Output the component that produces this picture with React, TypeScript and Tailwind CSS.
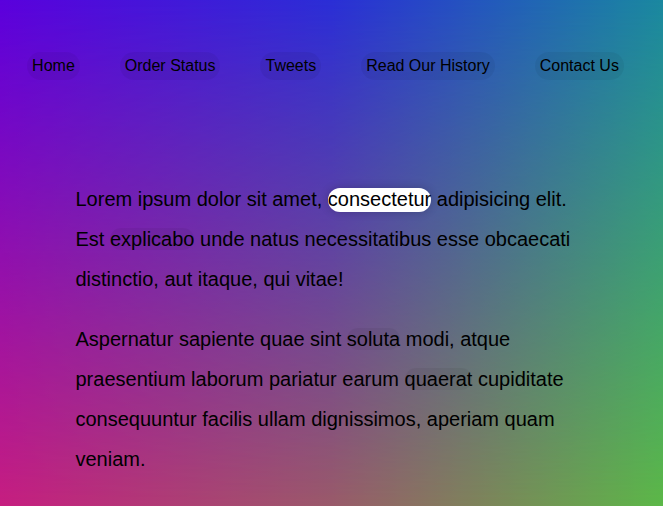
import React from "react";

const navItems = ["Home", "Order Status", "Tweets", "Read Our History", "Contact Us"];

function Link({ children, active = false }: { children: React.ReactNode; active?: boolean }) {
  return active ? (
    <a className="rounded-[20px] bg-white pb-[2px] text-black no-underline shadow-[0_0_10px_rgba(0,0,0,0.2)]">
      {children}
    </a>
  ) : (
    <a className="rounded-[20px] bg-[rgba(0,0,0,0.05)] text-black no-underline">{children}</a>
  );
}

export default function App() {
  return (
    <div className="relative min-h-screen w-full overflow-hidden bg-[linear-gradient(to_right,#c71e80,#9a5a6a_50%,#5cb848)] font-['Liberation_Sans',Arial,sans-serif] text-black">
      <div className="absolute inset-0 bg-[linear-gradient(to_right,#5a00dd,#2a2ed6_50%,#1a88a0)] [mask-image:linear-gradient(to_bottom,#000,transparent)]" />
      <div className="relative w-[651px]">
        <nav className="pt-[52px]">
          <ul className="flex list-none justify-center p-0 text-[16px]">
            {navItems.map((item) => (
              <li key={item}>
                <a className="mx-5 inline-block rounded-[20px] bg-[rgba(0,0,0,0.05)] p-[5px] leading-[18px] text-black no-underline">
                  {item}
                </a>
              </li>
            ))}
          </ul>
        </nav>
        <div className="mx-auto mt-[99px] flex max-w-[500px] flex-col gap-5 pb-5 text-[20px] leading-[40px]">
          <p>
            Lorem ipsum dolor sit amet, <Link active>consectetur</Link> adipisicing elit. Est{" "}
            <Link>explicabo</Link> unde natus necessitatibus esse obcaecati distinctio, aut itaque, qui vitae!
          </p>
          <p>
            Aspernatur sapiente quae sint <Link>soluta</Link> modi, atque praesentium laborum pariatur earum{" "}
            <Link>quaerat</Link> cupiditate consequuntur facilis ullam dignissimos, aperiam quam veniam.
          </p>
        </div>
      </div>
    </div>
  );
}
